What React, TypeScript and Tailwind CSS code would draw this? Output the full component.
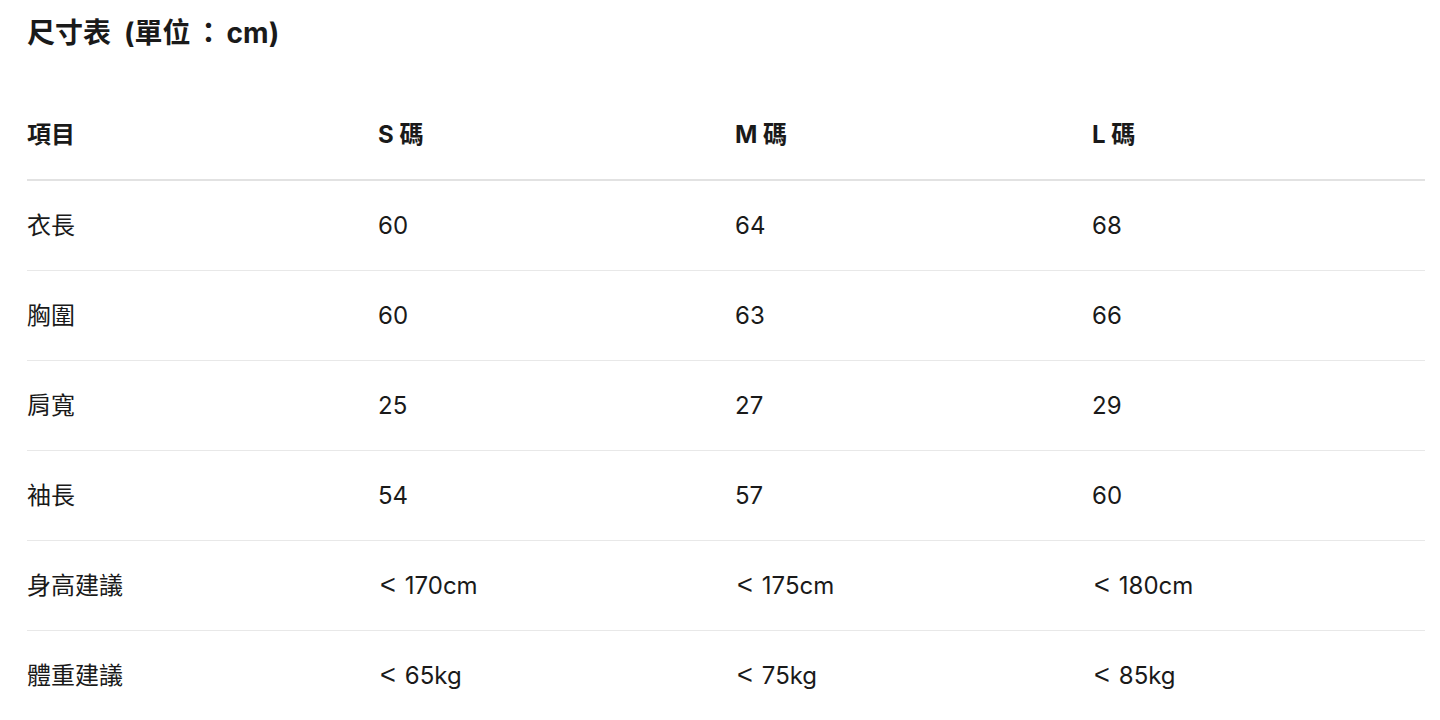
import React from "react";

const rows: string[][] = [
  ["衣長", "60", "64", "68"],
  ["胸圍", "60", "63", "66"],
  ["肩寬", "25", "27", "29"],
  ["袖長", "54", "57", "60"],
  ["身高建議", "< 170cm", "< 175cm", "< 180cm"],
  ["體重建議", "< 65kg", "< 75kg", "< 85kg"],
];

const font = {
  fontFamily: 'Inter, "Noto Sans CJK TC", "Noto Sans CJK SC", sans-serif',
};

const lt = {
  fontFamily: '"Liberation Sans", sans-serif',
};

export default function App() {
  return (
    <div
      className="min-h-[720px] w-full bg-white px-[27px] text-[#1a1a1a]"
      style={font}
    >
      <div className="flex h-[66px] items-center">
        <h1 className="text-[28px] font-bold leading-none">
          尺寸表<span className="ml-[13px]">(</span>單位
          <span className="mx-[4px]">：</span>cm)
        </h1>
      </div>
      <div className="mt-[24px] w-[1398px]">
        <div className="grid h-[91px] grid-cols-[351px_357px_357px_1fr] items-center border-b-2 border-[#e2e2e2] text-[24px] font-bold">
          <div>項目</div>
          <div>S 碼</div>
          <div>M 碼</div>
          <div>L 碼</div>
        </div>
        {rows.map((r, i) => (
          <div
            key={i}
            className={`grid h-[90px] grid-cols-[351px_357px_357px_1fr] items-center text-[24px] ${
              i < rows.length - 1 ? "border-b border-[#e8e8e8]" : ""
            }`}
          >
            {r.map((c, j) => (
              <div key={j}>
                {c.startsWith("<") ? (
                  <>
                    <span
                      className="ml-[2px] mr-[9px] text-[27px] font-light leading-none"
                      style={lt}
                    >
                      &lt;
                    </span>
                    {c.slice(2)}
                  </>
                ) : (
                  c
                )}
              </div>
            ))}
          </div>
        ))}
      </div>
    </div>
  );
}
